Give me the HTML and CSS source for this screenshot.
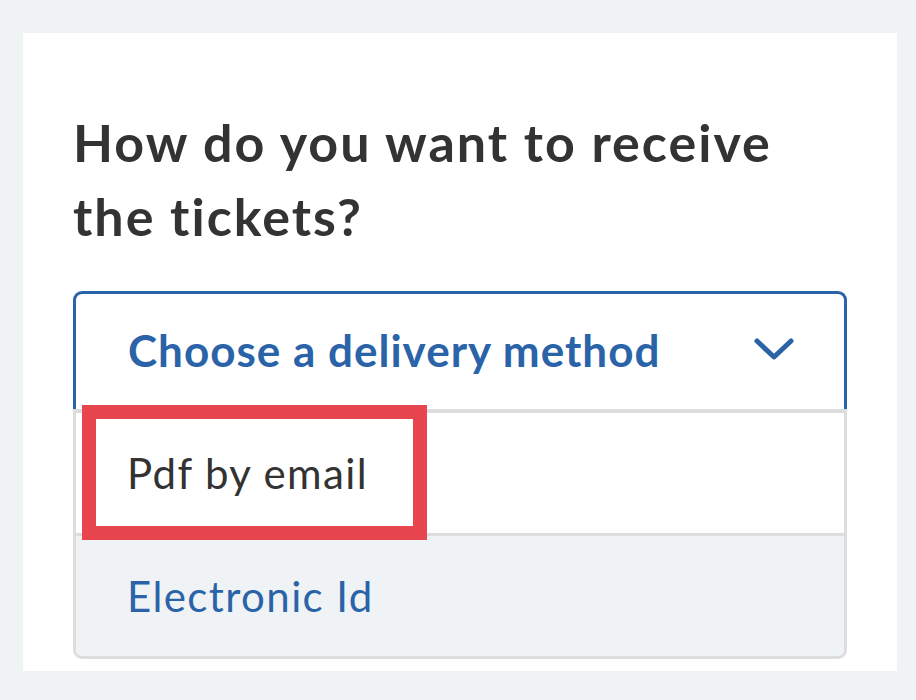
FILE: index.html
```html
<!DOCTYPE html>
<html lang="en">
<head>
    <meta charset="UTF-8">
    <title>Delivery method</title>
    <link rel="stylesheet" href="styles.css">
</head>
<body>
<div class="card">
    <h2 class="question">How do you want to receive the tickets?</h2>

    <div class="select">
        <span class="select-label">Choose a delivery method</span>
        <svg class="chevron" width="40" height="24" viewBox="0 0 40 24">
            <path d="M3 3 L20 19 L37 3" fill="none" stroke="currentColor" stroke-width="5" stroke-linecap="round" stroke-linejoin="round"/>
        </svg>
    </div>

    <ul class="options">
        <li class="option option-selected">Pdf by email</li>
        <li class="option option-alt">Electronic Id</li>
        <div class="highlight"></div>
    </ul>
</div>
</body>
</html>
```

FILE: styles.css
```css
body {
    margin: 0;
    padding: 33px 0 0 23px;
    background-color: #f0f3f4;
    font-family: Lato, "Open Sans", sans-serif;
}

.card {
    width: 874px;
    box-sizing: border-box;
    background: white;
    padding: 72px 50px 12px 50px;
}

.question {
    margin: 0 0 38px 0;
    font-size: 52px;
    line-height: 74px;
    font-weight: 700;
    letter-spacing: 2px;
    color: #333333;
    width: 740px;
}

.select {
    display: flex;
    align-items: center;
    justify-content: space-between;
    height: 115px;
    padding: 0 50px 4px 52px;
    box-sizing: border-box;
    height: 118px;
    border: 3px solid #2a63a8;
    border-bottom: none;
    border-radius: 9px 9px 0 0;
}

.select-label {
    font-size: 44px;
    font-weight: 700;
    letter-spacing: 1px;
    color: #2a63a8;
}

.chevron {
    color: #2a63a8;
}

.options {
    position: relative;
    list-style: none;
    margin: 0;
    padding: 0;
    border: 3px solid #dddddd;
    border-top-width: 4px;
    border-radius: 0 0 9px 9px;
}

.option {
    display: flex;
    align-items: center;
    height: 120px;
    padding-left: 51px;
    font-size: 42px;
    letter-spacing: 1.4px;
}

.option-selected {
    background: white;
    color: #333333;
}

.option-alt {
    background: #f0f3f5;
    color: #2a63a8;
    border-top: 3px solid #dddddd;
    border-radius: 0 0 7px 7px;
}

.highlight {
    position: absolute;
    left: 6px;
    top: -8px;
    width: 317px;
    height: 107px;
    border: 14px solid #e8464f;
}
```
